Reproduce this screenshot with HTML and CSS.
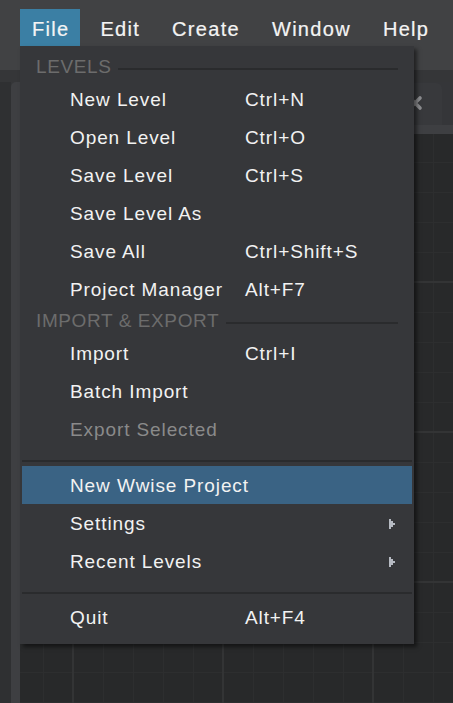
FILE: index.html
```html
<!DOCTYPE html>
<html>
<head>
<meta charset="utf-8">
<link rel="stylesheet" href="styles.css">
</head>
<body>
<div class="app">
  <div class="menubar">
    <div class="mb-item active">File</div>
    <div class="mb-item">Edit</div>
    <div class="mb-item">Create</div>
    <div class="mb-item">Window</div>
    <div class="mb-item">Help</div>
  </div>
  <div class="main">
    <div class="top-gap"></div>
    <div class="work">
      <div class="gutter"></div>
      <div class="panel">
        <div class="tabs">
          <div class="tab">
            <svg class="close" width="16" height="16" viewBox="0 0 16 16"><path d="M3 3 L13 13 M13 3 L3 13" stroke="#8d8e91" stroke-width="3.6" stroke-linecap="round"/></svg>
          </div>
        </div>
        <div class="tabstrip"></div>
        <div class="viewport"></div>
      </div>
    </div>
  </div>

  <div class="menu">
    <div class="hdr"><span>LEVELS</span><i class="hline"></i></div>
    <div class="row"><span class="lbl">New Level</span><span class="sc">Ctrl+N</span></div>
    <div class="row"><span class="lbl">Open Level</span><span class="sc">Ctrl+O</span></div>
    <div class="row"><span class="lbl">Save Level</span><span class="sc">Ctrl+S</span></div>
    <div class="row"><span class="lbl">Save Level As</span></div>
    <div class="row"><span class="lbl">Save All</span><span class="sc">Ctrl+Shift+S</span></div>
    <div class="row"><span class="lbl">Project Manager</span><span class="sc">Alt+F7</span></div>
    <div class="hdr"><span>IMPORT &amp; EXPORT</span><i class="hline"></i></div>
    <div class="row"><span class="lbl">Import</span><span class="sc">Ctrl+I</span></div>
    <div class="row"><span class="lbl">Batch Import</span></div>
    <div class="row disabled"><span class="lbl">Export Selected</span></div>
    <div class="sep"></div>
    <div class="row hl"><span class="lbl">New Wwise Project</span></div>
    <div class="row"><span class="lbl">Settings</span><svg class="arrow" width="6" height="10" viewBox="0 0 6 10"><rect x="0" y="0" width="2" height="10" fill="#b6bac2"/><rect x="2" y="2" width="2" height="6" fill="#b6bac2"/><rect x="4" y="4" width="2" height="2" fill="#b6bac2"/></svg></div>
    <div class="row"><span class="lbl">Recent Levels</span><svg class="arrow" width="6" height="10" viewBox="0 0 6 10"><rect x="0" y="0" width="2" height="10" fill="#b6bac2"/><rect x="2" y="2" width="2" height="6" fill="#b6bac2"/><rect x="4" y="4" width="2" height="2" fill="#b6bac2"/></svg></div>
    <div class="sep"></div>
    <div class="row"><span class="lbl">Quit</span><span class="sc">Alt+F4</span></div>
  </div>
</div>
</body>
</html>
```

FILE: styles.css
```css
* { box-sizing: border-box; }
html, body { margin: 0; padding: 0; }
body {
  width: 453px;
  height: 703px;
  overflow: hidden;
  background: #28292a;
  font-family: "Liberation Sans", Arial, sans-serif;
}
.app {
  position: relative;
  width: 453px;
  height: 703px;
  display: flex;
  flex-direction: column;
}
.menubar {
  height: 70px;
  background: #414244;
  display: flex;
  gap: 8px;
  padding: 9px 0 0 20px;
  align-items: flex-start;
}
.mb-item {
  height: 37px;
  padding: 3px 12px 0;
  line-height: 34px;
  font-size: 20px;
  letter-spacing: 1.3px;
  color: #f4f4f4;
  -webkit-text-stroke: 0.2px #f4f4f4;
}
.mb-item.active { background: #3b7fa4; padding-right: 11px; }

.main {
  flex: 1;
  display: flex;
  flex-direction: column;
  background: #353638;
}
.top-gap { height: 12px; }
.work { flex: 1; display: flex; }
.gutter { width: 11px; background: #2f3032; }
.panel {
  flex: 1;
  display: flex;
  flex-direction: column;
  background: #3e3f42;
  border-top-left-radius: 5px;
  padding-left: 9px;
}
.tabs {
  height: 43px;
  background: #353639;
  display: flex;
  justify-content: flex-end;
  padding-top: 1px;
}
.tab {
  width: 60px;
  margin-right: 11px;
  background: #38393c;
  border-top-right-radius: 6px;
  display: flex;
  align-items: center;
  justify-content: flex-end;
  padding-right: 19px;
  padding-bottom: 2px;
}
.close { display: block; }
.tabstrip { height: 9px; background: #3e3f42; }
.viewport {
  flex: 1;
  background-color: #28292a;
  background-image:
    linear-gradient(90deg, #333435 0 2px, transparent 2px),
    linear-gradient(180deg, #333435 0 2px, transparent 2px),
    linear-gradient(90deg, #2d2e2f 0 1px, transparent 1px),
    linear-gradient(180deg, #2d2e2f 0 1px, transparent 1px);
  background-size: 150px 100%, 100% 150px, 30px 100%, 100% 30px;
  background-position: 52px 0, 0 147px, 23px 0, 0 28px;
}

.menu {
  position: absolute;
  left: 20px;
  top: 46px;
  width: 394px;
  background: #36373a;
  padding: 8px 0;
  box-shadow: 3px 3px 4px rgba(0, 0, 0, 0.5);
  font-size: 19px;
  letter-spacing: 0.9px;
  color: #f2f2f2;
}
.hdr {
  height: 26px;
  line-height: 26px;
  display: flex;
  align-items: center;
  gap: 7px;
  padding: 0 16px;
  color: #6c6c6c;
  letter-spacing: 0.6px;
}
.hline {
  flex: 1;
  height: 2px;
  margin-top: 3px;
  background: #2a2b2d;
}
.row {
  height: 38px;
  line-height: 38px;
  margin: 0 2px;
  padding: 1px 17px 0 48px;
  display: flex;
  align-items: center;
}
.lbl { width: 175px; white-space: nowrap; }
.sc { white-space: nowrap; }
.arrow { margin-left: auto; display: block; }
.disabled { color: #8a8a8a; }
.hl { background: #3a6384; }
.sep {
  height: 18px;
  margin: 0 2px;
  padding-top: 12px;
}
.sep::after {
  content: "";
  display: block;
  height: 2px;
  background: #2a2b2d;
}
```
